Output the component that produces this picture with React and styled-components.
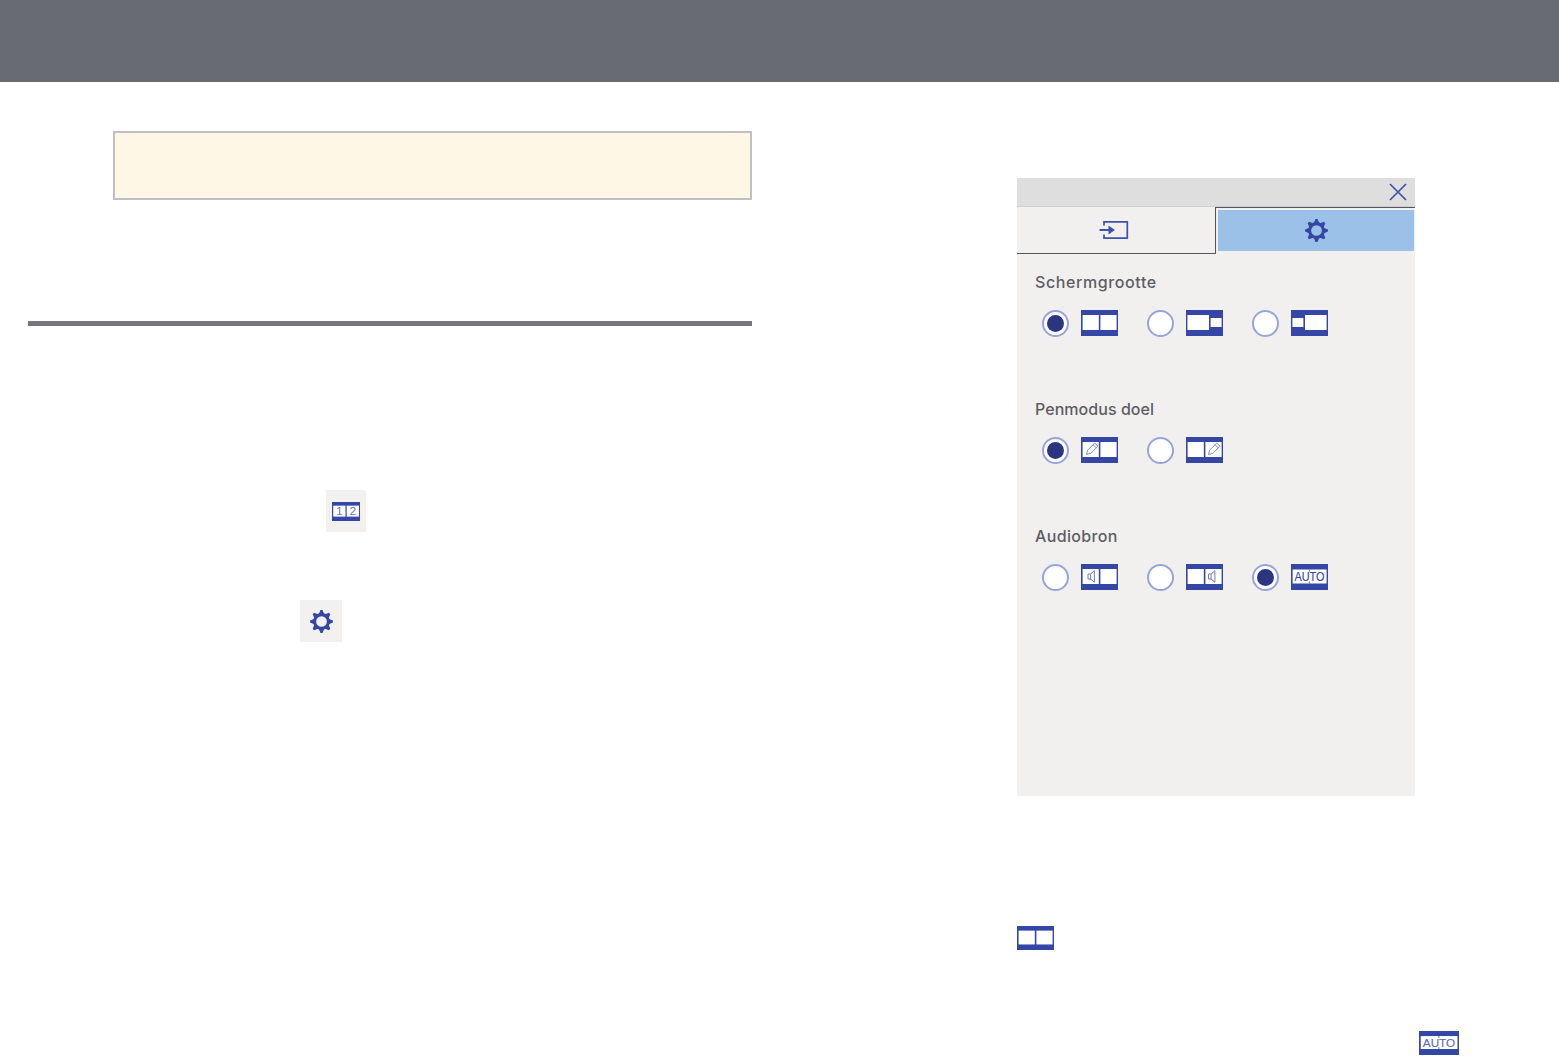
import React from "react";
import styled, { createGlobalStyle } from "styled-components";

const Global = createGlobalStyle`
  html, body { margin: 0; padding: 0; background: #fff; }
  body { font-family: "Inter", "Noto Sans", sans-serif; }
`;

const BLUE = "#3547a5";

const Page = styled.div`
  width: 1559px;
  height: 1057px;
  overflow: hidden;
  background: #fff;
`;
const TopBar = styled.header`
  height: 82px;
  background: #686b73;
`;
const Columns = styled.main`
  display: grid;
  grid-template-columns: 724px 398px;
  column-gap: 265px;
  padding-left: 28px;
`;
const LeftColumn = styled.section`
  display: flex;
  flex-direction: column;
`;
const Callout = styled.div`
  box-sizing: border-box;
  margin: 49px 0 0 85px;
  height: 69px;
  background: #fef7e5;
  border: 2px solid #c0c0c0;
`;
const Rule = styled.hr`
  margin: 121px 0 0;
  height: 5px;
  border: 0;
  background: #77777d;
`;
const IconTile = styled.div`
  display: flex;
  align-items: center;
  justify-content: center;
  box-sizing: border-box;
  width: ${(p) => p.$w}px;
  height: 42px;
  margin-top: ${(p) => p.$top}px;
  margin-left: ${(p) => p.$left}px;
  background: #f2f1f0;
`;
const RightColumn = styled.section`
  display: flex;
  flex-direction: column;
  align-items: flex-start;
`;
const Panel = styled.div`
  width: 398px;
  height: 618px;
  margin-top: 96px;
  background: #f1f0ef;
  display: flex;
  flex-direction: column;
`;
const TitleBar = styled.div`
  height: 29px;
  box-sizing: border-box;
  background: #dedede;
  border-bottom: 1px solid #cfcfcf;
  display: flex;
  align-items: center;
  justify-content: flex-end;
  padding-right: 8px;
`;
const Tabs = styled.div`
  display: grid;
  grid-template-columns: 199px 199px;
  height: 47px;
`;
const InputTab = styled.div`
  box-sizing: border-box;
  border-bottom: 1px solid #55565c;
  border-right: 1px solid #55565c;
  display: flex;
  align-items: center;
  justify-content: center;
  padding: 0 4px 0 0;
`;
const SettingsTab = styled.div`
  box-sizing: border-box;
  border-top: 1px solid #55565c;
  padding: 2px 1px 3px 2px;
  display: flex;
`;
const SettingsFill = styled.div`
  flex: 1;
  background: #9cc1e9;
  display: flex;
  align-items: center;
  justify-content: center;
`;
const Body = styled.div`
  padding: 16px 0 0 18px;
`;
const Group = styled.div`
  height: 127px;
`;
const GroupLabel = styled.div`
  font-size: 16px;
  font-weight: 500;
  line-height: 24px;
  letter-spacing: ${(p) => p.$track}px;
  color: #5d5e64;
`;
const Options = styled.div`
  display: flex;
  margin: 16px 0 0 7px;
`;
const Option = styled.div`
  width: 105px;
  display: flex;
  align-items: flex-start;
  gap: 12px;
`;
const Radio = styled.span`
  box-sizing: border-box;
  width: 27px;
  height: 27px;
  border-radius: 50%;
  border: 2px solid #97a4dc;
  background: #fff;
  display: flex;
  align-items: center;
  justify-content: center;
  &::after {
    content: "";
    display: ${(p) => (p.$on ? "block" : "none")};
    width: 17px;
    height: 17px;
    border-radius: 50%;
    background: #2b3580;
  }
`;
const IconText = styled.text`
  font-family: "Liberation Sans", sans-serif;
  font-size: ${(p) => p.$size}px;
  fill: ${(p) => p.$fill};
`;
const AutoLabel = styled(IconText)`
  stroke: ${(p) => p.$fill};
  stroke-width: 0.15px;
`;
const BottomIcon = styled.div`
  display: flex;
  margin-top: ${(p) => p.$top}px;
  margin-left: ${(p) => p.$left}px;
`;

const Pencil = ({ x }) => (
  <g transform={`translate(${x} 12.5) rotate(45) scale(1.25)`} fill="none" stroke="#7d8ac8" strokeWidth="0.75">
    <path d="M-1.8 -5.5h3.6v8.2l-1.8 2.9l-1.8 -2.9z" />
    <path d="M-1.8 -3.6h3.6" />
  </g>
);
const Speaker = ({ x }) => (
  <path
    d={`M${x - 3} 10h2.6l3.8 -3.3v11.6l-3.8 -3.3h-2.6z M${x - 0.4} 10v6`}
    fill="none"
    stroke="#6f7dc2"
    strokeWidth="1"
  />
);

const Layout = ({ kind = "split", w = 37, h = 26, children }) => (
  <svg width={w} height={h} viewBox="0 0 37 26" preserveAspectRatio="none" aria-hidden="true">
    <rect width="37" height="26" fill={BLUE} />
    {kind === "split" && (
      <>
        <rect x="1.6" y="5" width="16.2" height="15" fill="#fff" />
        <rect x="19.4" y="5" width="16.2" height="15" fill="#fff" />
      </>
    )}
    {kind === "right" && (
      <>
        <rect x="1.4" y="5" width="21.6" height="15" fill="#fff" />
        <rect x="24.6" y="8" width="11" height="9" fill="#fff" />
      </>
    )}
    {kind === "left" && (
      <>
        <rect x="1.4" y="8" width="11" height="9" fill="#fff" />
        <rect x="14" y="5" width="21.6" height="15" fill="#fff" />
      </>
    )}
    {kind === "auto" && (
      <>
        <rect x="1.6" y="5.5" width="34" height="14" fill="#fff" />
        <path d="M18.4 5.5v2M18.4 17.5v2" stroke={BLUE} strokeWidth="0.8" />
      </>
    )}
    {children}
  </svg>
);

const teeth = [0, 45, 90, 135, 180, 225, 270, 315];
const Gear = ({ size = 25 }) => (
  <svg width={size} height={size} viewBox="0 0 24 24" aria-hidden="true">
    {teeth.map((a) => (
      <path key={a} d="M9 6 L11 1 H13 L15 6 Z" fill={BLUE} transform={`rotate(${a} 12 12)`} />
    ))}
    <circle cx="12" cy="12" r="6.6" fill="none" stroke={BLUE} strokeWidth="2.9" />
  </svg>
);

const InputIcon = () => (
  <svg width="30" height="20" viewBox="0 0 30 20" aria-hidden="true" fill="none" stroke="#3f50ad">
    <path d="M5 5.5V1.8H28.3V18.2H5V14.5" strokeWidth="1.7" />
    <path d="M0.5 10H10" strokeWidth="2" />
    <path d="M9.5 5.5l6.5 4.5l-6.5 4.5z" fill="#3f50ad" stroke="none" />
  </svg>
);

const CloseIcon = () => (
  <svg width="18" height="18" viewBox="0 0 18 18" aria-hidden="true">
    <path d="M1 1L17 17M17 1L1 17" stroke="#3f50ad" strokeWidth="1.7" fill="none" />
  </svg>
);

const AutoText = ({ fill = BLUE }) => (
  <AutoLabel transform="translate(18.5 17) scale(0.87 1)" textAnchor="middle" $size={12.5} $fill={fill}>
    AUTO
  </AutoLabel>
);

const groups = [
  {
    label: "Schermgrootte",
    track: 0.6,
    options: [
      { on: true, icon: <Layout /> },
      { icon: <Layout kind="right" /> },
      { icon: <Layout kind="left" /> },
    ],
  },
  {
    label: "Penmodus doel",
    track: 0.05,
    options: [
      { on: true, icon: <Layout><Pencil x={10.5} /></Layout> },
      { icon: <Layout><Pencil x={27.5} /></Layout> },
    ],
  },
  {
    label: "Audiobron",
    track: 0.35,
    options: [
      { icon: <Layout><Speaker x={10} /></Layout> },
      { icon: <Layout><Speaker x={25.5} /></Layout> },
      { on: true, icon: <Layout kind="auto"><AutoText /></Layout> },
    ],
  },
];

export default function App() {
  return (
    <Page>
      <Global />
      <TopBar />
      <Columns>
        <LeftColumn>
          <Callout />
          <Rule />
          <IconTile $w={40} $top={164} $left={298}>
            <Layout w={28} h={19}>
              <IconText x="9.7" y="18" textAnchor="middle" $size={16} $fill="#6a78bd">1</IconText>
              <IconText x="27.5" y="18" textAnchor="middle" $size={16} $fill="#6a78bd">2</IconText>
            </Layout>
          </IconTile>
          <IconTile $w={42} $top={68} $left={272}>
            <Gear />
          </IconTile>
        </LeftColumn>
        <RightColumn>
          <Panel>
            <TitleBar>
              <CloseIcon />
            </TitleBar>
            <Tabs>
              <InputTab>
                <InputIcon />
              </InputTab>
              <SettingsTab>
                <SettingsFill>
                  <Gear />
                </SettingsFill>
              </SettingsTab>
            </Tabs>
            <Body>
              {groups.map((g) => (
                <Group key={g.label}>
                  <GroupLabel $track={g.track}>{g.label}</GroupLabel>
                  <Options>
                    {g.options.map((o, i) => (
                      <Option key={i}>
                        <Radio $on={o.on} />
                        {o.icon}
                      </Option>
                    ))}
                  </Options>
                </Group>
              ))}
            </Body>
          </Panel>
          <BottomIcon $top={130} $left={0}>
            <Layout w={37} h={24} />
          </BottomIcon>
          <BottomIcon $top={81} $left={402}>
            <Layout kind="auto" w={40} h={24}>
              <AutoText fill="#5d6cb8" />
            </Layout>
          </BottomIcon>
        </RightColumn>
      </Columns>
    </Page>
  );
}
